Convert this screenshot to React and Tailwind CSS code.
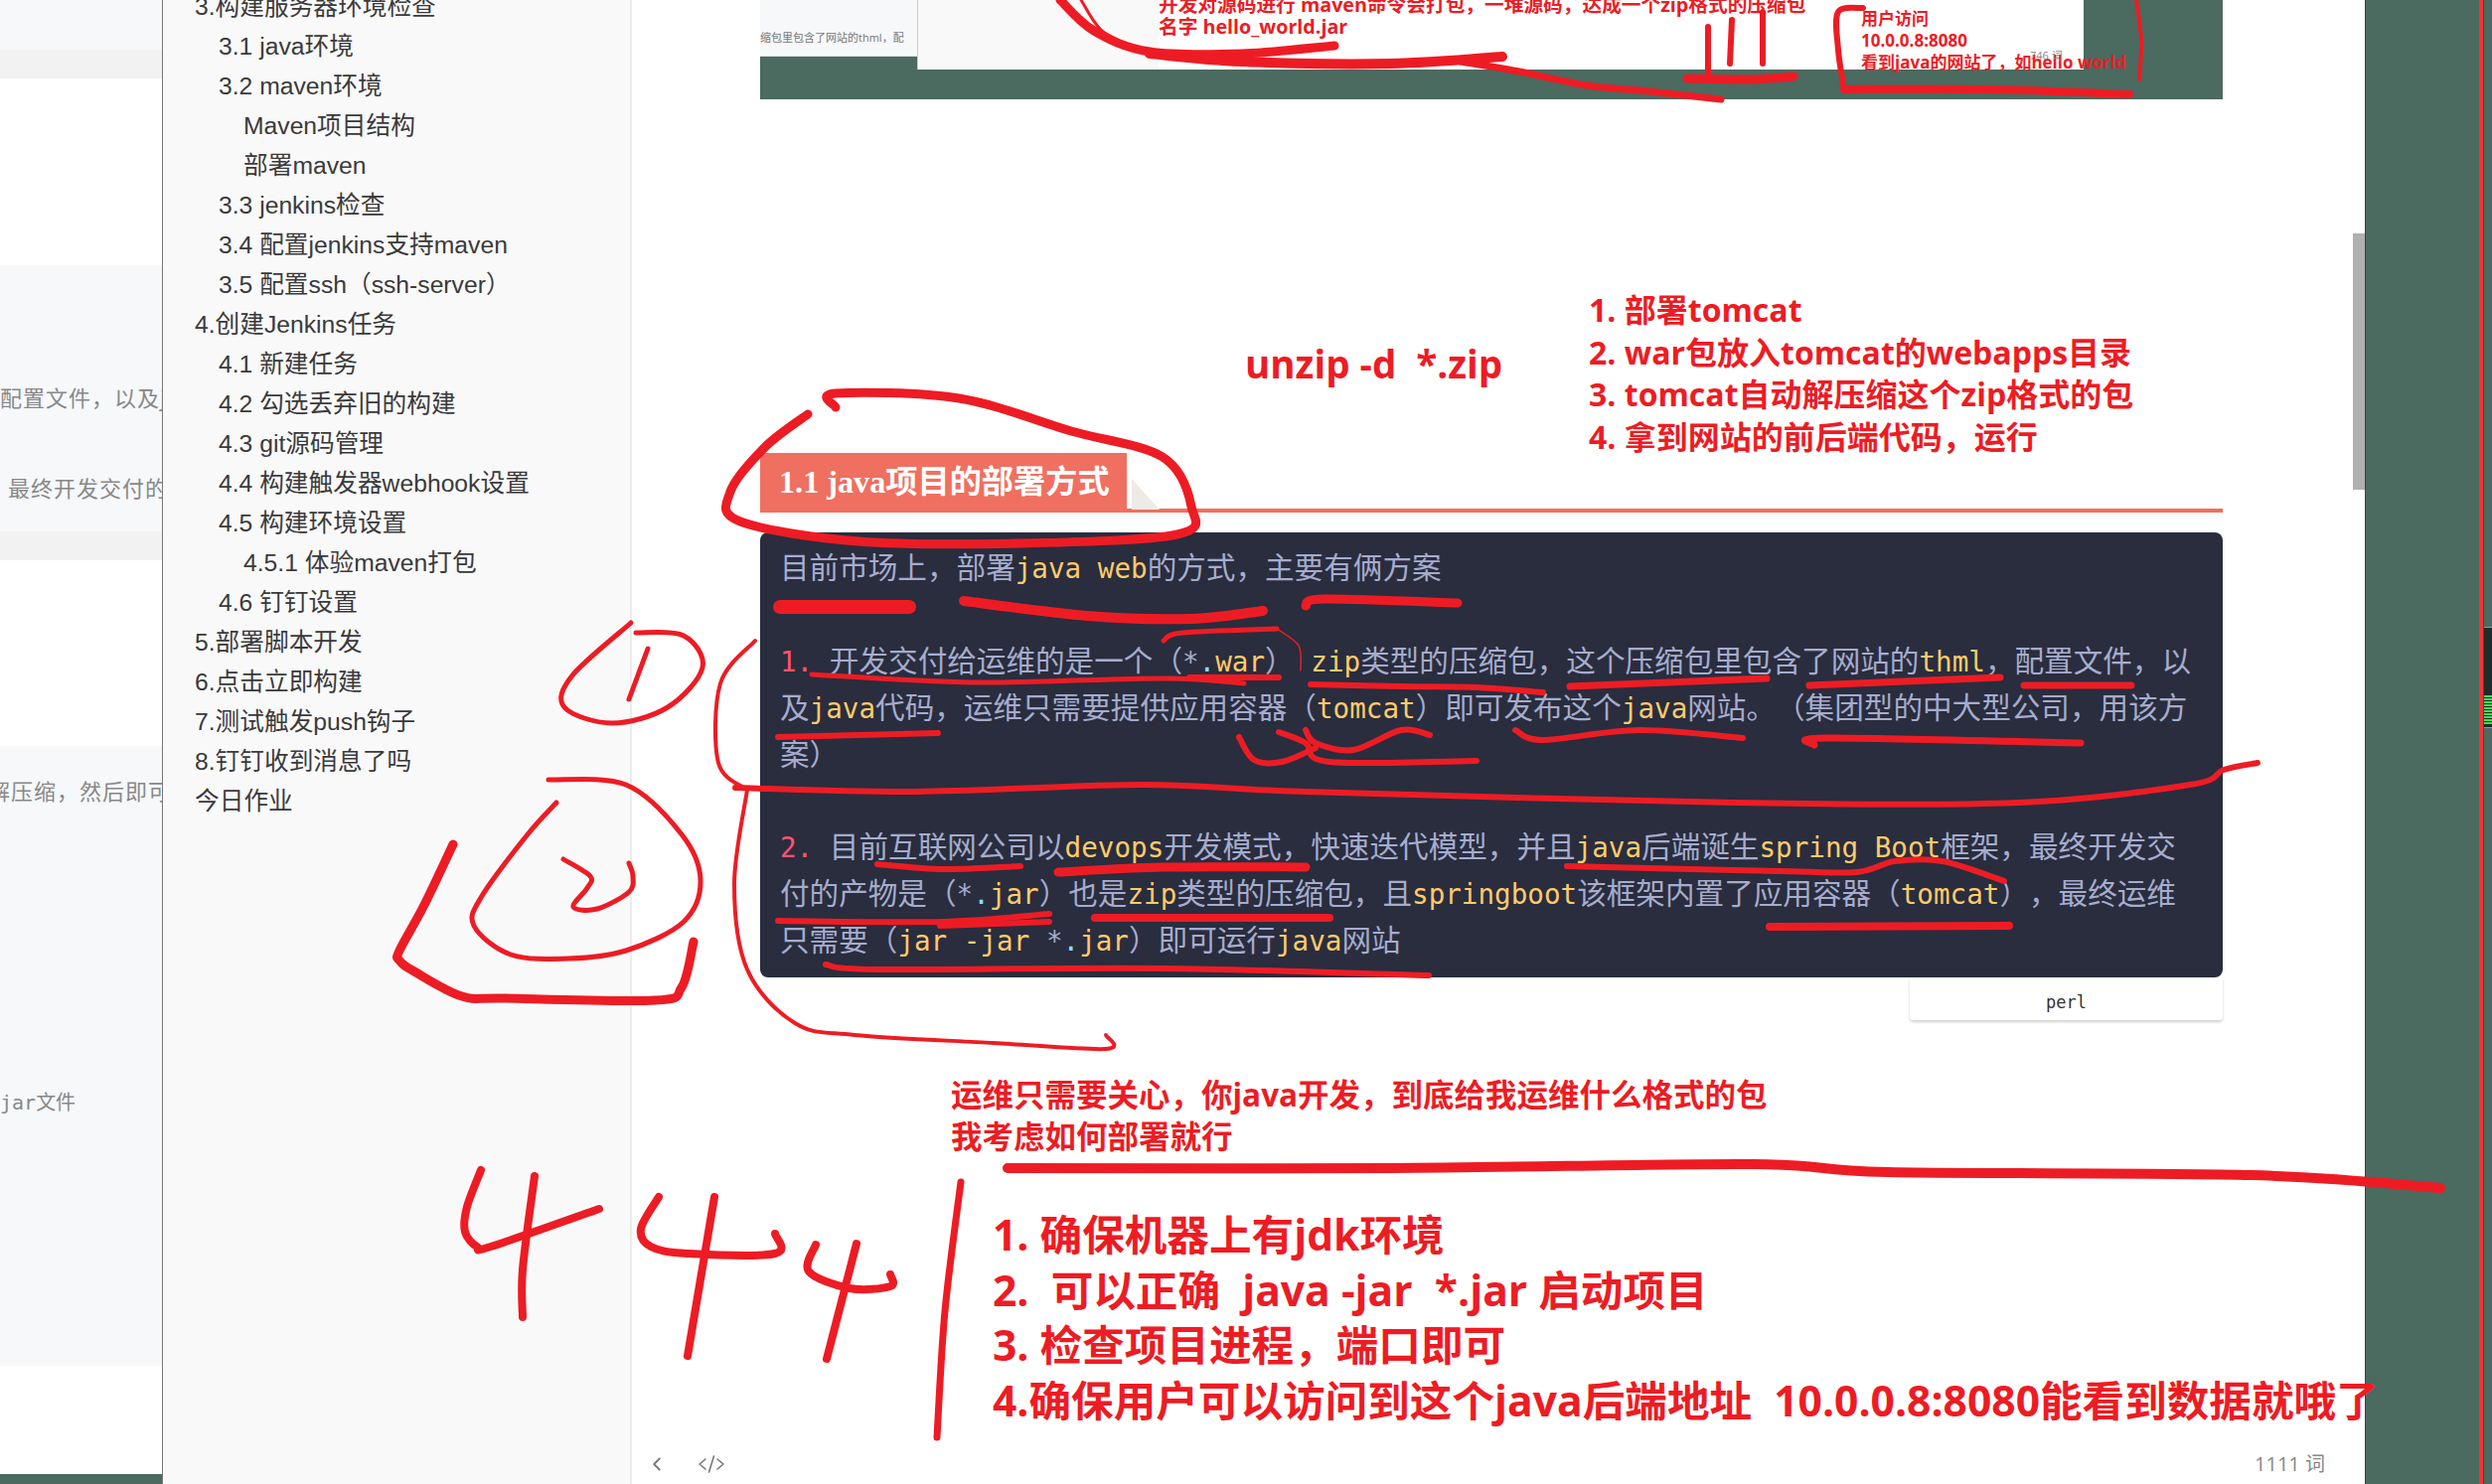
import { ChevronLeft } from "lucide-react";

const toc = [
  [0, "3.构建服务器环境检查"],
  [1, "3.1 java环境"],
  [1, "3.2 maven环境"],
  [2, "Maven项目结构"],
  [2, "部署maven"],
  [1, "3.3 jenkins检查"],
  [1, "3.4 配置jenkins支持maven"],
  [1, "3.5 配置ssh（ssh-server）"],
  [0, "4.创建Jenkins任务"],
  [1, "4.1 新建任务"],
  [1, "4.2 勾选丢弃旧的构建"],
  [1, "4.3 git源码管理"],
  [1, "4.4 构建触发器webhook设置"],
  [1, "4.5 构建环境设置"],
  [2, "4.5.1 体验maven打包"],
  [1, "4.6 钉钉设置"],
  [0, "5.部署脚本开发"],
  [0, "6.点击立即构建"],
  [0, "7.测试触发push钩子"],
  [0, "8.钉钉收到消息了吗"],
  [0, "今日作业"],
];

// pen strokes: [width, x, y, x, y, ...] in page pixels
const strokes = [
  [9, 1067, 0, 1101, 31, 1157, 52, 1250, 54, 1343, 46],
  [3, 1088, 0, 1108, 30, 1140, 48],
  [10, 1157, 54, 1250, 62, 1400, 64, 1512, 57],
  [7, 1470, 62, 1529, 72, 1597, 86, 1660, 92, 1732, 100],
  [6, 1719, 27, 1719, 74],
  [6, 1743, 20, 1741, 64],
  [6, 1774, 12, 1774, 64],
  [9, 1698, 79, 1760, 80, 1805, 77],
  [6, 1875, 8, 1850, 12, 1850, 50, 1856, 91],
  [8, 1856, 90, 2000, 90, 2143, 95],
  [4, 2150, 0, 2155, 40, 2153, 80],
  [9, 813, 417, 770, 450, 735, 495, 745, 525, 864, 545, 1027, 547, 1185, 538, 1199, 510, 1170, 460, 1078, 434, 965, 401, 841, 396, 841, 410],
  [14, 785, 611, 915, 611],
  [10, 970, 605, 1094, 620, 1199, 623, 1271, 615],
  [9, 1314, 610, 1333, 603, 1467, 607],
  [5, 1171, 645, 1190, 637, 1285, 633],
  [1.5, 1285, 633, 1307, 650, 1309, 675],
  [5, 817, 679, 979, 687, 1171, 683, 1252, 688],
  [6, 1197, 682, 1287, 682],
  [6, 1319, 689, 1410, 691, 1486, 692, 1553, 697],
  [7, 1580, 691, 1778, 683],
  [7, 1821, 690, 2013, 682],
  [7, 2037, 690, 2145, 690],
  [6, 783, 742, 944, 738],
  [6, 1247, 742, 1262, 765, 1290, 767, 1324, 753],
  [6, 1287, 737, 1314, 748, 1338, 767, 1486, 766],
  [6, 1314, 735, 1324, 748, 1362, 755, 1410, 735, 1439, 740],
  [6, 1525, 735, 1553, 745, 1649, 735, 1754, 743],
  [7, 1826, 750, 1840, 743, 2094, 748],
  [6, 740, 793, 922, 797, 1151, 790, 1314, 797, 1745, 808, 2032, 808, 2204, 790, 2238, 775, 2272, 768],
  [4, 760, 645, 725, 688, 723, 768, 752, 795],
  [4, 752, 795, 739, 890, 752, 976, 800, 1030, 860, 1042, 1000, 1050, 1113, 1056, 1113, 1042],
  [6, 883, 870, 950, 875, 1027, 872],
  [9, 1065, 878, 1171, 873, 1314, 873],
  [6, 1577, 872, 1793, 877, 1869, 878, 1907, 867, 1955, 867, 2017, 887],
  [6, 783, 927, 950, 928, 1056, 920],
  [6, 946, 932, 1056, 928],
  [8, 1102, 924, 1338, 924],
  [8, 1781, 933, 2022, 932],
  [6, 831, 971, 884, 976, 1171, 975, 1438, 982],
  [5, 635, 627, 576, 680, 568, 712, 616, 728, 672, 712, 707, 672, 688, 640, 640, 637],
  [5, 652, 653, 633, 704],
  [5, 552, 785, 630, 790, 686, 840, 705, 886, 688, 928, 630, 957, 572, 965, 514, 961, 477, 932, 485, 902, 531, 840, 560, 808],
  [5, 567, 865, 594, 882, 591, 894, 577, 913, 601, 915, 633, 898, 637, 882, 633, 869],
  [9, 456, 850, 427, 911, 402, 957, 402, 967, 417, 978, 465, 1003, 509, 1005, 659, 1007, 686, 994, 698, 948],
  [8, 484, 1178, 470, 1215, 468, 1240, 480, 1255, 494, 1255, 603, 1217],
  [8, 538, 1184, 526, 1278, 526, 1326],
  [8, 663, 1205, 645, 1237, 655, 1255, 692, 1262, 780, 1262, 780, 1242],
  [8, 719, 1205, 692, 1365],
  [8, 821, 1253, 814, 1280, 855, 1297, 896, 1295, 896, 1283],
  [8, 862, 1252, 832, 1368],
  [7, 967, 1190, 951, 1320, 943, 1447],
  [10, 1014, 1176, 1400, 1176, 1764, 1172, 1900, 1180, 2266, 1183, 2456, 1196],
];

function strokePath(pts) {
  const p = [];
  for (let i = 0; i < pts.length; i += 2) p.push([pts[i], pts[i + 1]]);
  let d = `M${p[0][0]} ${p[0][1]}`;
  for (let i = 0; i < p.length - 1; i++) {
    const a = p[Math.max(i - 1, 0)];
    const b = p[i];
    const c = p[i + 1];
    const e = p[Math.min(i + 2, p.length - 1)];
    d += ` C${b[0] + (c[0] - a[0]) / 6} ${b[1] + (c[1] - a[1]) / 6} ${c[0] - (e[0] - b[0]) / 6} ${c[1] - (e[1] - b[1]) / 6} ${c[0]} ${c[1]}`;
  }
  return d;
}

function Ink() {
  return (
    <svg viewBox="0 0 2508 1494" className="absolute inset-0 z-20 w-[2508px] h-[1494px] pointer-events-none">
      {strokes.map(([w, ...pts], i) => (
        <path key={i} d={strokePath(pts)} fill="none" stroke="#ed1c24" strokeWidth={w} strokeLinecap="round" strokeLinejoin="round" />
      ))}
    </svg>
  );
}

// latin in the code block is set smaller than the cjk around it
const M = ({ children }) => <span className="text-[27.6px]">{children}</span>;
const Y = ({ children }) => <span className="text-[27.6px] text-[#ffcb6b]">{children}</span>;
const Dot = () => <span className="text-[27.6px] text-[#89ddff]">.</span>;
const Num = ({ children }) => <span className="text-[27.6px] text-[#ff5370]">{children}</span>;

function LeftPanel() {
  return (
    <div className="w-[163px] shrink-0 flex flex-col overflow-hidden bg-white font-['Noto_Sans_CJK_SC',sans-serif] text-[22px] tracking-[1px] text-[#888] whitespace-nowrap">
      <div className="h-[50px] bg-[#f6f8fa]"></div>
      <div className="h-[29px] bg-[#f2f2f2]"></div>
      <div className="h-[188px]"></div>
      <div className="h-[268px] bg-[#f6f8fa] pt-[116px] flex flex-col">
        <div className="h-8 leading-8">配置文件，以及jar</div>
        <div className="h-8 leading-8 mt-[59px] pl-2">最终开发交付的</div>
      </div>
      <div className="h-[29px] bg-[#f2f2f2]"></div>
      <div className="h-[187px]"></div>
      <div className="h-[624px] bg-[#f6f8fa] pt-[28px] flex flex-col">
        <div className="h-8 leading-8 -ml-3">解压缩，然后即可</div>
        <div className="h-8 leading-8 mt-[282px] text-[20px] tracking-normal">
          <span className="font-['DejaVu_Sans_Mono',monospace]">jar</span>文件
        </div>
      </div>
      <div className="flex-1"></div>
      <div className="h-[10px] bg-[#4b6a60]"></div>
    </div>
  );
}

function Sidebar() {
  return (
    <div className="w-[473px] shrink-0 overflow-hidden border-l border-l-[#777] border-r-2 border-r-[#ececec] bg-[#f9f9fa] pl-8 font-['Liberation_Sans','Noto_Sans_CJK_SC',sans-serif] text-[24.7px] text-[#3a3a3a]">
      <ul className="-mt-[13px]">
        {toc.map(([level, text]) => (
          <li key={text} className={`h-10 leading-10 whitespace-nowrap ${level === 1 ? "pl-[24px]" : level === 2 ? "pl-[49px]" : ""}`}>
            {text}
          </li>
        ))}
      </ul>
    </div>
  );
}

function TopSheet() {
  return (
    <div className="h-[100px] bg-[#4b6a60] flex items-start text-[#ed1c24] font-bold font-['Open_Sans','Noto_Sans_CJK_SC',sans-serif]">
      <div className="w-[158px] h-[57px] shrink-0 bg-[#f6f8fa] border-b border-[#ddd] overflow-hidden whitespace-nowrap pt-[28px] text-[11px] font-normal leading-[20px] text-[#777]">
        缩包里包含了网站的thml，配
      </div>
      <div className="w-[1174px] h-[70px] shrink-0 flex bg-white border-l border-[#ccc]">
        <div className="w-[242px] shrink-0 bg-[#f9f9fa]"></div>
        <div className="w-[707px] shrink-0 -mt-[6px] text-[19.7px] leading-[22px] whitespace-nowrap z-10">
          <div>开发对源码进行 maven命令会打包，一堆源码，达成一个zip格式的压缩包</div>
          <div>名字 hello_world.jar</div>
        </div>
        <div className="relative pt-[8px] text-[17px] leading-[22px] whitespace-nowrap">
          <div>用户访问</div>
          <div>10.0.0.8:8080</div>
          <div>看到java的网站了，如hello world</div>
          <span className="absolute left-[170px] top-[50px] text-[11px] leading-3 font-normal text-[#888]">746 词</span>
        </div>
      </div>
    </div>
  );
}

function CodeBlock() {
  return (
    <div className="mt-5 h-[448px] rounded-lg bg-[#292d3e] pl-5 pt-[13px] font-['DejaVu_Sans_Mono','Noto_Sans_CJK_SC',monospace] text-[29.6px] leading-[47px] text-[#a6accd] whitespace-pre [text-spacing-trim:space-all]">
      <div className="mb-[47px]">
        目前市场上，部署<Y>java web</Y>的方式，主要有俩方案
      </div>
      <div className="mb-[46px]">
        <div><Num>1.</Num><M> </M>开发交付给运维的是一个（<M>*</M><Dot /><Y>war</Y>）<M> </M><Y>zip</Y>类型的压缩包，这个压缩包里包含了网站的<Y>thml</Y>，配置文件，以</div>
        <div>及<Y>java</Y>代码，运维只需要提供应用容器（<Y>tomcat</Y>）即可发布这个<Y>java</Y>网站。（集团型的中大型公司，用该方</div>
        <div>案）</div>
      </div>
      <div>
        <div><Num>2.</Num><M> </M>目前互联网公司以<Y>devops</Y>开发模式，快速迭代模型，并且<Y>java</Y>后端诞生<Y>spring Boot</Y>框架，最终开发交</div>
        <div>付的产物是（<M>*</M><Dot /><Y>jar</Y>）也是<Y>zip</Y>类型的压缩包，且<Y>springboot</Y>该框架内置了应用容器（<Y>tomcat</Y>），最终运维</div>
        <div>只需要（<Y>jar -jar</Y><M> *</M><Dot /><Y>jar</Y>）即可运行<Y>java</Y>网站</div>
      </div>
    </div>
  );
}

function Main() {
  return (
    <div className="relative flex-1 flex flex-col bg-white min-w-0">
      <div className="flex-1 pl-[129px] pr-[143px] flex flex-col">
        <TopSheet />

        <div className="mt-[191px] h-[165px] flex text-[#ed1c24] font-bold font-['Open_Sans','Noto_Sans_CJK_SC',sans-serif]">
          <div className="ml-[488px] w-[346px] shrink-0 mt-[53px] text-[38.5px] leading-[44px] whitespace-pre">unzip -d  *.zip</div>
          <div className="text-[32px] leading-[42.5px] whitespace-nowrap">
            <div>1. 部署tomcat</div>
            <div>2. war包放入tomcat的webapps目录</div>
            <div>3. tomcat自动解压缩这个zip格式的包</div>
            <div>4. 拿到网站的前后端代码，运行</div>
          </div>
        </div>

        <div className="h-[60px] flex border-b-4 border-[#ef7060]">
          <div className="w-[369px] h-[60px] bg-[#ef7060] pl-[19px] text-white font-bold font-['Liberation_Serif','Noto_Sans_CJK_SC',serif] text-[32.2px] leading-[58px] whitespace-nowrap">
            1.1 java项目的部署方式
          </div>
          <svg width="35" height="60" viewBox="0 0 35 60" className="shrink-0">
            <polygon points="5,26 33,57 5,57" fill="#eeeae6" />
          </svg>
        </div>

        <CodeBlock />

        <div className="self-end w-[315px] h-[43px] shrink-0 rounded-b bg-white shadow-[0_2px_3px_rgba(0,0,0,0.18)] text-center font-['DejaVu_Sans_Mono',monospace] text-[17px] leading-[50px] text-[#333]">
          perl
        </div>

        <div className="mt-[54px] ml-[192px] text-[#ed1c24] font-bold font-['Open_Sans','Noto_Sans_CJK_SC',sans-serif] text-[31.5px] leading-[42px] whitespace-nowrap">
          <div>运维只需要关心，你java开发，到底给我运维什么格式的包</div>
          <div>我考虑如何部署就行</div>
        </div>

        <div className="mt-[50px] ml-[234px] text-[#ed1c24] font-bold font-['Open_Sans','Noto_Sans_CJK_SC',sans-serif] text-[42.6px] leading-[55.7px] whitespace-pre relative z-10">
          <div>1. 确保机器上有jdk环境</div>
          <div>2.  可以正确  java -jar  *.jar 启动项目</div>
          <div>3. 检查项目进程，端口即可</div>
          <div>4.确保用户可以访问到这个java后端地址  10.0.0.8:8080能看到数据就哦了</div>
        </div>
      </div>

      <div className="absolute bottom-0 left-0 right-0 h-10 flex items-center pl-[14px] pr-10 text-[#777]">
        <ChevronLeft size={22} strokeWidth={2} />
        <svg width="28" height="20" viewBox="0 0 28 20" fill="none" stroke="#777" strokeWidth="1.6" strokeLinecap="round" strokeLinejoin="round" className="ml-[30px]">
          <path d="M8 5 L2 10 L8 15 M20 5 L26 10 L20 15 M16.5 2 L11.5 18" />
        </svg>
        <span className="ml-auto font-['Open_Sans','Noto_Sans_CJK_SC',sans-serif] text-[20px] text-[#888]">1111 词</span>
      </div>

      {/* scrollbar thumb */}
      <div className="absolute right-0 top-[235px] w-3 h-[258px] bg-[#b0b0b0]"></div>
    </div>
  );
}

function DesktopEdge() {
  return (
    <div className="w-[128px] shrink-0 bg-[#4b6a60] border-l border-[#2f4a42] flex justify-end">
      <div className="w-[5px] bg-[#f53333] border-r border-[#b01818]"></div>
      <div className="w-[8px] shrink-0">
        <div className="mt-[631px] h-[102px] bg-[#1f2d28] border-y border-[#999] flex flex-col justify-end gap-px pb-[3px]">
          {[0, 1, 2, 3, 4, 5, 6, 7, 8, 9].map((n) => (
            <div key={n} className="h-[2px] bg-[#3ddc5f]"></div>
          ))}
        </div>
      </div>
    </div>
  );
}

export default function App() {
  return (
    <div className="relative flex w-[2508px] h-[1494px] overflow-hidden bg-white">
      <LeftPanel />
      <Sidebar />
      <Main />
      <DesktopEdge />
      <Ink />
    </div>
  );
}
